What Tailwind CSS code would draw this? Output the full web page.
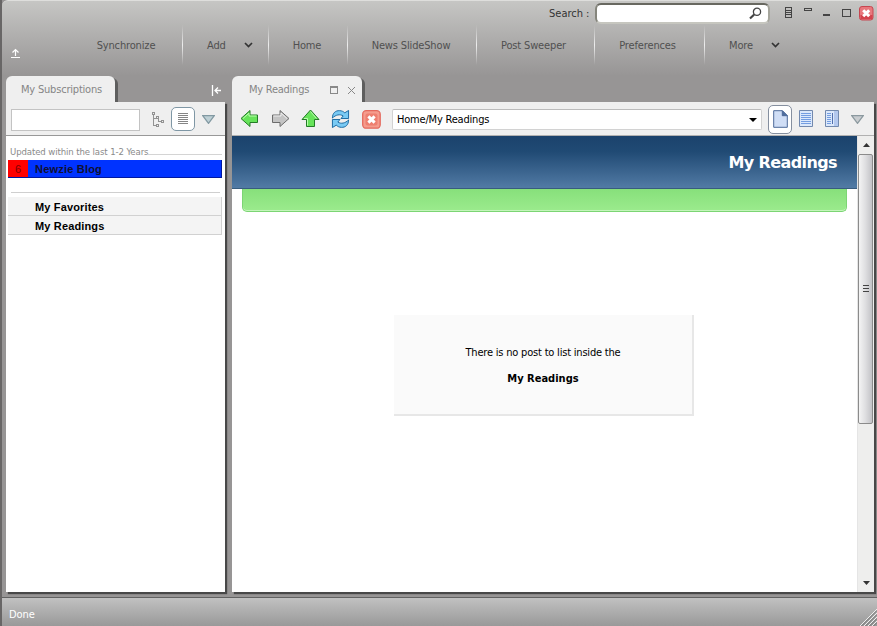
<!DOCTYPE html>
<html lang="en">
<head>
    <meta charset="UTF-8">
    <meta name="viewport" content="width=device-width, initial-scale=1.0">
    <title>My Readings - Newzie</title>
    <script src="https://cdn.jsdelivr.net/npm/@tailwindcss/browser@4"></script>
</head>
<body class="w-[877px] h-[626px] overflow-hidden bg-[#979595] font-['DejaVu_Sans_Condensed','DejaVu_Sans',sans-serif] text-[11px] leading-[14px]">
    <div class="relative flex flex-col w-full h-full border-l-2 border-[#686666]">
        <!-- Header -->
        <header class="h-[76px] shrink-0 border-t border-[#dededc] rounded-tl-md bg-linear-to-b from-[#c6c6c4] via-[#aeadac] via-50% to-[#979595]">
            <div class="flex items-start h-[24px] pl-[547px]">
                <label class="w-[46px] pt-[6px] text-[#333] whitespace-nowrap">Search :</label>
                <div class="mt-[2px] w-[175px] h-[21px] rounded-[6px] border-2 border-t-[#686860] border-l-[#85857c] border-r-[#a5a59c] border-b-[#c6c6bf] bg-white flex justify-end items-center pr-[6px]">
                    <svg class="w-[13px] h-[13px]" viewBox="0 0 13 13" fill="none" stroke="#444">
                        <circle cx="8" cy="4.8" r="3.6" stroke-width="1.3"/>
                        <path d="M5.2 7.5L1 11.5" stroke-width="2.2"/>
                    </svg>
                </div>
                <svg class="ml-[13px] mt-[5px] w-[68px] h-[14px]" viewBox="0 0 68 14" fill="none" stroke="#444" shape-rendering="crispEdges">
                    <path d="M2.500 1.500h6v10h-6zM3 4.500h5M3 6.500h5M3 8.500h5M21.500 2.500h7v2h-7z"/>
                    <path d="M40 9h7" stroke-width="2"/>
                    <path d="M59.500 3.500h8v7h-8z"/>
                </svg>
                <svg class="ml-[8px] mt-[5px] w-[15px] h-[15px]" viewBox="0 0 15 15">
                    <rect x=".5" y=".5" width="13.500" height="13.500" rx="2.500" fill="#e8777c" stroke="#c64650"/>
                    <path d="M1.500 9h12v4h-12z" fill="#d3434d"/>
                    <path d="M4.200 4.200l6 6M10.200 4.200l-6 6" stroke="#fff" stroke-width="3"/>
                </svg>
            </div>
            <nav class="flex h-[40px] text-[#505050] tracking-[-0.15px]">
                <div class="w-[68px] flex items-end pl-[8px]">
                    <svg class="mb-[6px] w-[11px] h-[11px]" viewBox="0 0 11 11" fill="none" stroke="#fff" stroke-width="1.200">
                        <path d="M1 9.500h9M5.500 8V1.500M2.500 4.500l3-3 3 3"/>
                    </svg>
                </div>
                <div class="w-[112px] flex items-center justify-center pt-[2px]">Synchronize</div>
                <div class="w-px bg-linear-to-b from-transparent via-[#eee] to-transparent"></div>
                <div class="w-[85px] flex items-center pl-[24px] pt-[2px]">Add
                    <svg class="ml-[18px] mb-[2px] w-[9px] h-[6px]" viewBox="0 0 9 6" fill="none" stroke="#333" stroke-width="1.700"><path d="M1 1l3.500 3.500L8 1"/></svg>
                </div>
                <div class="w-px bg-linear-to-b from-transparent via-[#eee] to-transparent"></div>
                <div class="w-[78px] flex items-center justify-center pr-[2px] pt-[2px]">Home</div>
                <div class="w-px bg-linear-to-b from-transparent via-[#eee] to-transparent"></div>
                <div class="w-[128px] flex items-center justify-center pr-[2px] pt-[2px]">News SlideShow</div>
                <div class="w-px bg-linear-to-b from-transparent via-[#eee] to-transparent"></div>
                <div class="w-[117px] flex items-center justify-center pr-[4px] pt-[2px]">Post Sweeper</div>
                <div class="w-px bg-linear-to-b from-transparent via-[#eee] to-transparent"></div>
                <div class="w-[109px] flex items-center justify-center pr-[4px] pt-[2px]">Preferences</div>
                <div class="w-px bg-linear-to-b from-transparent via-[#eee] to-transparent"></div>
                <div class="flex items-center pl-[24px] pt-[2px]">More
                    <svg class="ml-[18px] mb-[2px] w-[9px] h-[6px]" viewBox="0 0 9 6" fill="none" stroke="#333" stroke-width="1.700"><path d="M1 1l3.500 3.500L8 1"/></svg>
                </div>
            </nav>
        </header>

        <main class="flex h-[516px] shrink-0 pl-[4px] gap-[7px]">
            <!-- Subscriptions panel -->
            <section class="w-[219px] flex flex-col">
                <div class="flex h-[26px] shrink-0">
                    <div class="w-[109px] rounded-t-[6px] bg-[#efefef] pl-[15px] pt-[7px] text-[#858585] whitespace-nowrap tracking-[-0.2px] shadow-[3px_2px_0_#5e5e5e]">My Subscriptions</div>
                    <svg class="ml-[96px] mt-[9px] w-[11px] h-[11px]" viewBox="0 0 11 11" fill="none" stroke="#fff" stroke-width="1.300">
                        <path d="M1.500 0v11M10 5.500H4.500M7 2.500l-3 3 3 3"/>
                    </svg>
                </div>
                <div class="relative flex-1 flex flex-col bg-white shadow-[2px_2px_1px_#484848]">
                    <div class="h-[34px] shrink-0 flex items-center bg-[#efefef] border-b border-[#989898] pl-[5px]">
                        <div class="w-[129px] h-[22px] mt-[3px] bg-white border border-[#c3c3c3]"></div>
                        <svg class="ml-[12px] mt-[2px] w-[12px] h-[15px]" viewBox="0 0 12 15" fill="none" stroke="#929292" shape-rendering="crispEdges">
                            <path d="M.500.500h2v2h-2zM1.500 3v10.500h2M2 6.500h2M4.500 4.500h2v2h-2zM6.500 7v2.500h2M9.500 8.500h2v2h-2zM4.500 12.500h2v2h-2z"/>
                        </svg>
                        <div class="ml-[7px] w-[24px] h-[24px] rounded-[5px] border border-[#7f97a5] bg-white flex items-center justify-center">
                            <svg class="w-[10px] h-[11px]" viewBox="0 0 10 11" stroke="#858585" shape-rendering="crispEdges"><path d="M0 .500h10M0 2.500h10M0 4.500h10M0 6.500h10M0 8.500h10M0 10.500h10"/></svg>
                        </div>
                        <svg class="ml-[7px] mt-[2px] w-[13px] h-[9px]" viewBox="0 0 13 9"><path d="M.7.600h11.600L6.500 8.300z" fill="#bed0d5" stroke="#8299a2" stroke-width="1.300"/></svg>
                    </div>
                    <div class="relative h-[21px] pl-[4px] pt-[9px] text-[9.500px] text-[#8a8a8a] leading-[14px]">
                        <span class="whitespace-nowrap tracking-[-0.1px]">Updated within the last 1-2 Years</span>
                        <span class="absolute left-[142px] right-[3px] top-[18px] border-b border-[#d4d4d4]"></span>
                    </div>
                    <div class="mt-[3px] ml-[2px] w-[214px] h-[18px] flex items-center bg-[#0033ff] border-b border-r border-[#0018a0] font-['Liberation_Sans',sans-serif] text-[#101030]">
                        <span class="w-[20px] h-[17px] pt-[2px] bg-[#ff0000] text-center text-[#7d0000]">6</span>
                        <span class="pl-[7px] font-bold whitespace-nowrap tracking-[0.2px]">Newzie Blog</span>
                    </div>
                    <div class="mt-[14px] mx-[5px] h-[5px] border-t border-[#cfcfcf]"></div>
                    <div class="ml-[2px] w-[214px] h-[19px] pl-[27px] pt-[3px] bg-[#f4f4f4] border-b border-r border-[#d1d1d1] font-['Liberation_Sans',sans-serif] font-bold text-black tracking-[0.15px]">My Favorites</div>
                    <div class="ml-[2px] w-[214px] h-[19px] pl-[27px] pt-[3px] bg-[#f4f4f4] border-b border-r border-[#d1d1d1] font-['Liberation_Sans',sans-serif] font-bold text-black tracking-[0.15px]">My Readings</div>
                </div>
            </section>

            <!-- Readings panel -->
            <section class="w-[642px] flex flex-col">
                <div class="flex h-[26px] shrink-0">
                    <div class="w-[130px] rounded-t-[6px] bg-[#efefef] flex pl-[17px] pt-[7px] text-[#858585] whitespace-nowrap tracking-[-0.25px] shadow-[3px_2px_0_#5e5e5e]">
                        <span class="w-[81px]">My Readings</span>
                        <svg class="mt-[3px] w-[26px] h-[9px]" viewBox="0 0 26 9" fill="none" stroke="#888">
                            <path d="M.500 1.500h7v6h-7zM0 .500h8" shape-rendering="crispEdges"/>
                            <path d="M18 1l7 7M25 1l-7 7"/>
                        </svg>
                    </div>
                </div>
                <div class="relative flex-1 flex flex-col bg-white shadow-[2px_2px_1px_#484848]">
                    <div class="h-[34px] shrink-0 flex items-center bg-[#efefef] border-b border-[#b1b1b1] pl-[8px]">
                        <svg class="w-[19px] h-[19px]" viewBox="0 0 19 19"><path d="M1 9.500L10 1.500v4.500h7.500v7.500H10v4z" fill="#67e35a" stroke="#247b27" stroke-linejoin="round"/><path d="M3 9.500l6-5.300V7h7.500" fill="none" stroke="#baffad"/></svg>
                        <svg class="ml-[12px] w-[19px] h-[19px]" viewBox="0 0 19 19"><path d="M18 9.500L9 1.500v4.500H1.500v7.500H9v4z" fill="#c4c4c4" stroke="#6c6c6c" stroke-linejoin="round"/><path d="M2.500 7H10V4l6 5.500" fill="none" stroke="#eee"/></svg>
                        <svg class="ml-[11px] w-[19px] h-[19px]" viewBox="0 0 19 19"><path d="M9.500 1L18 10.500h-4.500v7h-8v-7H1z" fill="#67e35a" stroke="#247b27" stroke-linejoin="round"/><path d="M3 9.500h3.500v7M9.500 2.500l6 7" fill="none" stroke="#baffad"/></svg>
                        <svg class="ml-[11px] w-[19px] h-[20px]" viewBox="0 0 20 20" fill="#79caf4" stroke="#17669f" stroke-linejoin="round">
                            <path d="M1.500 9C1.500 3.500 5 1 9 1.200c2.500.1 4 1 5.500 2.300L18.500 1v8.500h-8l2.300-2.700C9.500 4.500 5 5.500 1.500 9z"/>
                            <path d="M18.500 11c0 5.500-3.500 8-7.500 7.800-2.500-.1-4-1-5.500-2.300L1.500 19v-8.500h8l-2.300 2.700c3.300 2.300 7.800 1.300 11.300-2.200z"/>
                        </svg>
                        <svg class="ml-[12px] mt-[1px] w-[19px] h-[19px]" viewBox="0 0 19 19"><rect x=".700" y=".700" width="17.500" height="17.500" rx="3.500" fill="#f59c8d" stroke="#e4695d" stroke-width="1.300"/><rect x="3.500" y="3.500" width="12" height="12" rx="2" fill="#ee7f70"/><path d="M6.400 6.400l6.200 6.200M12.600 6.400l-6.200 6.200" stroke="#fff" stroke-width="3"/></svg>
                        <div class="ml-[11px] mt-[2px] w-[370px] h-[21px] shrink-0 flex items-center justify-between bg-white border border-[#d2d2d2] border-t-[#bbb] rounded-[2px] pl-[4px] pr-[4px] text-black tracking-[-0.2px]">
                            <span>Home/My Readings</span>
                            <svg class="w-[8px] h-[4px]" viewBox="0 0 8 4"><path d="M0 0h8L4 4z"/></svg>
                        </div>
                        <div class="ml-[6px] mt-[1px] w-[24px] h-[29px] shrink-0 rounded-[5px] border border-[#858f9f] bg-white flex items-center justify-center">
                            <svg class="w-[15px] h-[18px]" viewBox="0 0 15 18"><path d="M.700.700h8.600l5 5v11.600H.700z" fill="#d0def6" stroke="#4d6999"/><path d="M9.300.700v5h5z" fill="#4f6e9f" stroke="#4d6999"/></svg>
                        </div>
                        <svg class="ml-[7px] w-[14px] h-[17px]" viewBox="0 0 14 17"><path d="M.500.500h13v16H.500z" fill="#dbe8fb" stroke="#7289ae"/><path d="M2 3.500h10M2 5.500h10M2 7.500h10M2 9.500h10M2 11.500h10M2 13.500h10" stroke="#739de1"/></svg>
                        <svg class="ml-[12px] w-[14px] h-[17px]" viewBox="0 0 14 17"><path d="M.500.500h13v16H.500z" fill="#dbe8fb" stroke="#7289ae"/><path d="M9 1h4v15H9z" fill="#b3c8ee"/><path d="M2 3.500h4M2 5.500h4M2 7.500h4M2 9.500h4M2 11.500h4M2 13.500h4" stroke="#739de1"/><path d="M7.500 3v11" stroke="#506fae"/></svg>
                        <svg class="ml-[12px] mt-[2px] w-[13px] h-[9px]" viewBox="0 0 13 9"><path d="M.7.600h11.600L6.500 8.300z" fill="#c9cdd0" stroke="#8b999f" stroke-width="1.300"/></svg>
                    </div>
                    <div class="flex flex-1">
                        <div class="w-[625px] flex flex-col">
                            <div class="h-[53px] flex items-center justify-end pt-[2px] pr-[20px] bg-linear-to-b from-[#1b426c] via-[#204a74] via-30% to-[#527ba5] border-b border-[#385c7e] text-white text-[16px] font-bold font-['DejaVu_Sans',sans-serif] tracking-[-0.6px] whitespace-nowrap"><span>My Readings</span></div>
                            <div class="mx-[10px] h-[23px] rounded-b-[5px] border border-t-0 border-[#7cd574] bg-linear-to-b from-[#87e07b] to-[#9beb8d] shadow-[inset_0_-1px_0_#c4f5bb]"></div>
                            <div class="mt-[103px] ml-[162px] w-[300px] h-[101px] border-r-2 border-b-2 border-[#e7e7e7] bg-[#fafafa] text-center text-black pt-[31px]">
                                <p class="tracking-[-0.2px]">There is no post to list inside the</p>
                                <p class="mt-[12px] font-bold">My Readings</p>
                            </div>
                        </div>
                        <!-- Scrollbar -->
                        <div class="w-[17px] flex flex-col items-center bg-[#eeeeed] border-l border-[#e5e5e5]">
                            <svg class="h-[18px] w-[7px] shrink-0" viewBox="0 0 7 18"><path d="M0 11h7L3.500 7z" fill="#333"/></svg>
                            <div class="w-[15px] h-[270px] mr-px flex items-center justify-center border border-[#8b8b8b] rounded-[2px] bg-linear-to-r from-[#f4f4f4] via-[#dedee0] to-[#c2c2c6]">
                                <svg class="w-[6px] h-[8px]" viewBox="0 0 6 8" stroke="#444" shape-rendering="crispEdges"><path d="M0 .500h6M0 3.500h6M0 6.500h6"/></svg>
                            </div>
                            <svg class="mt-auto h-[18px] w-[7px]" viewBox="0 0 7 18"><path d="M0 7h7L3.500 11z" fill="#333"/></svg>
                        </div>
                    </div>
                </div>
            </section>
        </main>

        <!-- Status bar -->
        <footer class="mt-[5px] h-[29px] shrink-0 flex items-center justify-between border-t border-[#626262] bg-linear-to-b from-[#c1c1c1] to-[#999] pl-[7px] text-white">
            <span class="pt-[5px] tracking-[-0.1px]">Done</span>
            <svg class="self-end w-[17px] h-[18px]" viewBox="0 0 17 18" fill="none" stroke="#eee"><path d="M0 18L17 1M4 18L17 5M8 18L17 9M12 18l5-5"/><path d="M1.500 18L17 2.500M5.500 18L17 6.500M9.500 18l7.500-7.500M13.500 18l3.500-3.500" stroke="#777"/></svg>
        </footer>
    </div>
</body>
</html>
